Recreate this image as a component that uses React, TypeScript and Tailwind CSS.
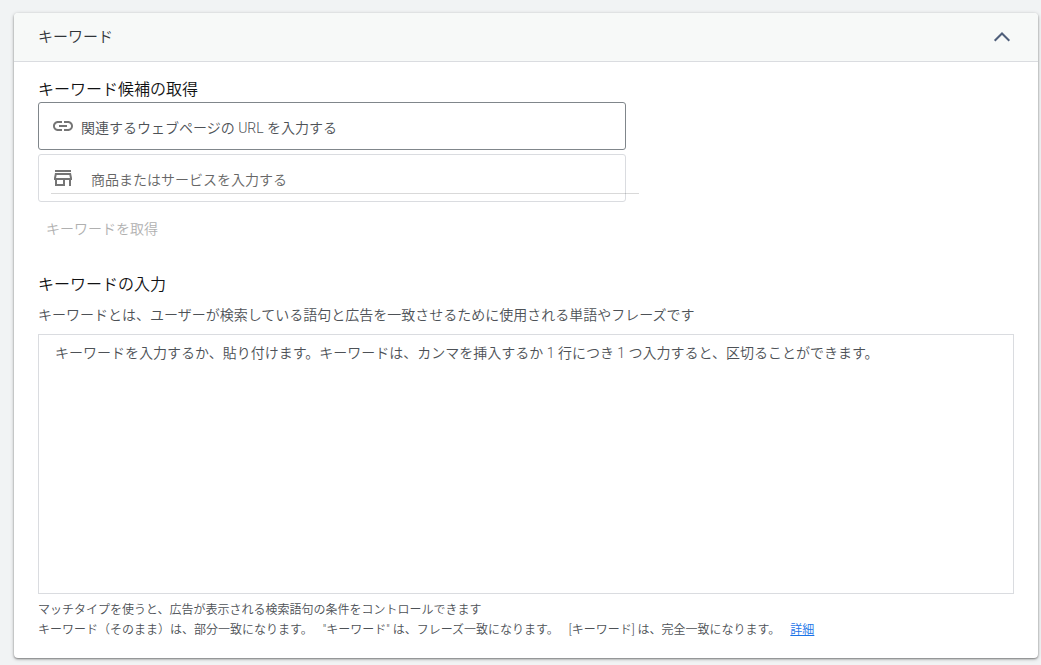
import { useState } from 'react'
import { MdLink, MdOutlineStore } from 'react-icons/md'

export default function App() {
  const [open, setOpen] = useState(true)

  return (
    <div className="min-h-screen bg-[#f1f3f4] pt-[13px] pr-[3px] pb-[7px] pl-[14px] font-['Roboto','Noto_Sans_CJK_JP',sans-serif] text-sm font-[350] text-[#4d5156]">
      <section className="rounded bg-white shadow-[0_1px_2px_rgba(0,0,0,0.4),0_1px_4px_rgba(0,0,0,0.2)]">
        <header className="flex h-[49px] items-center justify-between rounded-t border-b border-[#dadce0] bg-[#f7f9f8] pr-6 pl-6">
          <h2 className="pt-px text-[15px] font-[350] text-[#303438]">キーワード</h2>
          <button
            type="button"
            aria-label="キーワード"
            aria-expanded={open}
            onClick={() => setOpen(!open)}
            className="flex h-6 w-6 items-center justify-center"
          >
            <svg
              viewBox="0 0 24 24"
              className={open ? 'h-6 w-6' : 'h-6 w-6 rotate-180'}
              fill="none"
              stroke="#4f5f7a"
              strokeWidth="2"
            >
              <path d="M4.7 15.8 12 8.5l7.3 7.3" />
            </svg>
          </button>
        </header>

        {open && (
          <div className="pt-4 pr-6 pb-[18px] pl-6">
            <h3 className="text-base leading-6 font-[350] text-[#111213]">キーワード候補の取得</h3>
            <div className="w-[588px] max-w-full space-y-1">
              <label className="flex h-12 items-center rounded-[3px] border border-[#80868b] pl-3">
                <MdLink className="h-6 w-6 shrink-0 text-[#757575]" />
                <input
                  type="url"
                  aria-label="関連するウェブページの URL"
                  placeholder="関連するウェブページの URL を入力する"
                  className="ml-[6px] h-full min-w-0 flex-1 pt-1 outline-none placeholder:text-[#4d5156]"
                />
              </label>
              <div className="h-12 rounded-[3px] border border-[#dadce0] pl-3">
                {/* the underline runs past the box on the right */}
                <label className="-mr-[14px] flex h-[39px] items-end border-b border-black/15">
                  <MdOutlineStore className="mb-[3px] h-6 w-6 shrink-0 text-[#757575]" />
                  <input
                    type="text"
                    aria-label="商品またはサービス"
                    placeholder="商品またはサービスを入力する"
                    className="ml-4 h-[26px] min-w-0 flex-1 outline-none placeholder:text-[#666666]"
                  />
                </label>
              </div>
            </div>
            <button type="button" disabled className="mt-2 block h-9 px-2 pt-px text-[#b0b0b0]">
              キーワードを取得
            </button>

            <h3 className="mt-[27px] text-base leading-6 font-[350] text-[#111213]">キーワードの入力</h3>
            <p id="keyword-hint" className="mt-2 leading-5">
              キーワードとは、ユーザーが検索している語句と広告を一致させるために使用される単語やフレーズです
            </p>
            <textarea
              aria-label="キーワードの入力"
              aria-describedby="keyword-hint"
              placeholder="キーワードを入力するか、貼り付けます。キーワードは、カンマを挿入するか 1 行につき 1 つ入力すると、区切ることができます。"
              className="mt-[9px] block h-[260px] w-full resize-none border border-[#dadce0] px-4 py-2 leading-5 outline-none placeholder:text-[#4d5156]"
            />
            <div className="mt-[6px] text-xs leading-5">
              <p>マッチタイプを使うと、広告が表示される検索語句の条件をコントロールできます</p>
              <p className="flex flex-wrap gap-x-[10px]">
                <span>キーワード（そのまま）は、部分一致になります。</span>
                <span>"キーワード" は、フレーズ一致になります。</span>
                <span>[キーワード] は、完全一致になります。</span>
                <a href="#details" className="text-[#1a73e8] underline">
                  詳細
                </a>
              </p>
            </div>
          </div>
        )}
      </section>
    </div>
  )
}
